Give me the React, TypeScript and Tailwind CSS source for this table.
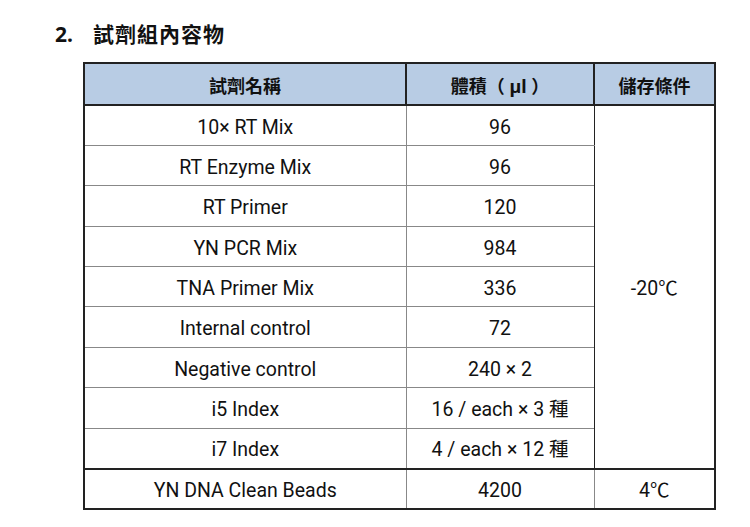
import React from "react";

const rows: [string, string][] = [
  ["10× RT Mix", "96"],
  ["RT Enzyme Mix", "96"],
  ["RT Primer", "120"],
  ["YN PCR Mix", "984"],
  ["TNA Primer Mix", "336"],
  ["Internal control", "72"],
  ["Negative control", "240 × 2"],
  ["i5 Index", "16 / each × 3 種"],
  ["i7 Index", "4 / each × 12 種"],
];

const font = { fontFamily: 'Roboto, "Noto Sans CJK TC", sans-serif' };
const head = { fontFamily: '"Noto Sans", "Noto Sans CJK TC", sans-serif' };

export default function App() {
  return (
    <div className="w-[750px] h-[527px] bg-white text-[#111]" style={font}>
      <div className="flex items-center pt-[19px] pl-[55px] h-[49px]" style={head}>
        <span className="text-[21px] font-bold w-[38px] leading-none">2.</span>
        <span className="text-[21px] font-bold leading-none tracking-[1px]">試劑組內容物</span>
      </div>
      <div className="pl-[83px] pt-[13px]">
        <table className="border-collapse w-[631px] table-fixed text-center text-[19.5px] leading-none">
          <colgroup>
            <col className="w-[322px]" />
            <col className="w-[188px]" />
            <col className="w-[121px]" />
          </colgroup>
          <thead style={head}>
            <tr className="h-[42px] bg-[#b8cce4]">
              <th className="border-2 border-[#222] text-[18px] font-bold pt-[3px]">試劑名稱</th>
              <th className="border-2 border-[#222] border-l-[1.5px] border-l-[#888] text-[18px] font-bold whitespace-pre pt-[3px]">體積（ µl ）</th>
              <th className="border-2 border-[#222] text-[18px] font-bold pt-[3px]">儲存條件</th>
            </tr>
          </thead>
          <tbody>
            {rows.map(([name, vol], i) => (
              <tr key={name} className="h-[40.4px]">
                <td className="pt-[4px] border-l-2 border-l-[#222] border-r-[1.5px] border-r-[#888] border-b-[1.5px] border-b-[#888] font-normal">
                  {name}
                </td>
                <td className="pt-[4px] border-r-[1.5px] border-r-[#222] border-b-[1.5px] border-b-[#888]">{vol}</td>
                {i === 0 && (
                  <td rowSpan={9} className="pt-[4px] border-r-2 border-r-[#222] border-l-[1.5px] border-l-[#222]">
                    -20℃
                  </td>
                )}
              </tr>
            ))}
            <tr className="h-[40.4px]">
              <td className="pt-[4px] border-2 border-[#222] border-r-[1.5px] border-r-[#888]">YN DNA Clean Beads</td>
              <td className="pt-[4px] border-2 border-[#222] border-x-[1.5px] border-x-[#888]">4200</td>
              <td className="pt-[4px] border-2 border-[#222] border-l-[1.5px] border-l-[#888]">4℃</td>
            </tr>
          </tbody>
        </table>
      </div>
    </div>
  );
}
